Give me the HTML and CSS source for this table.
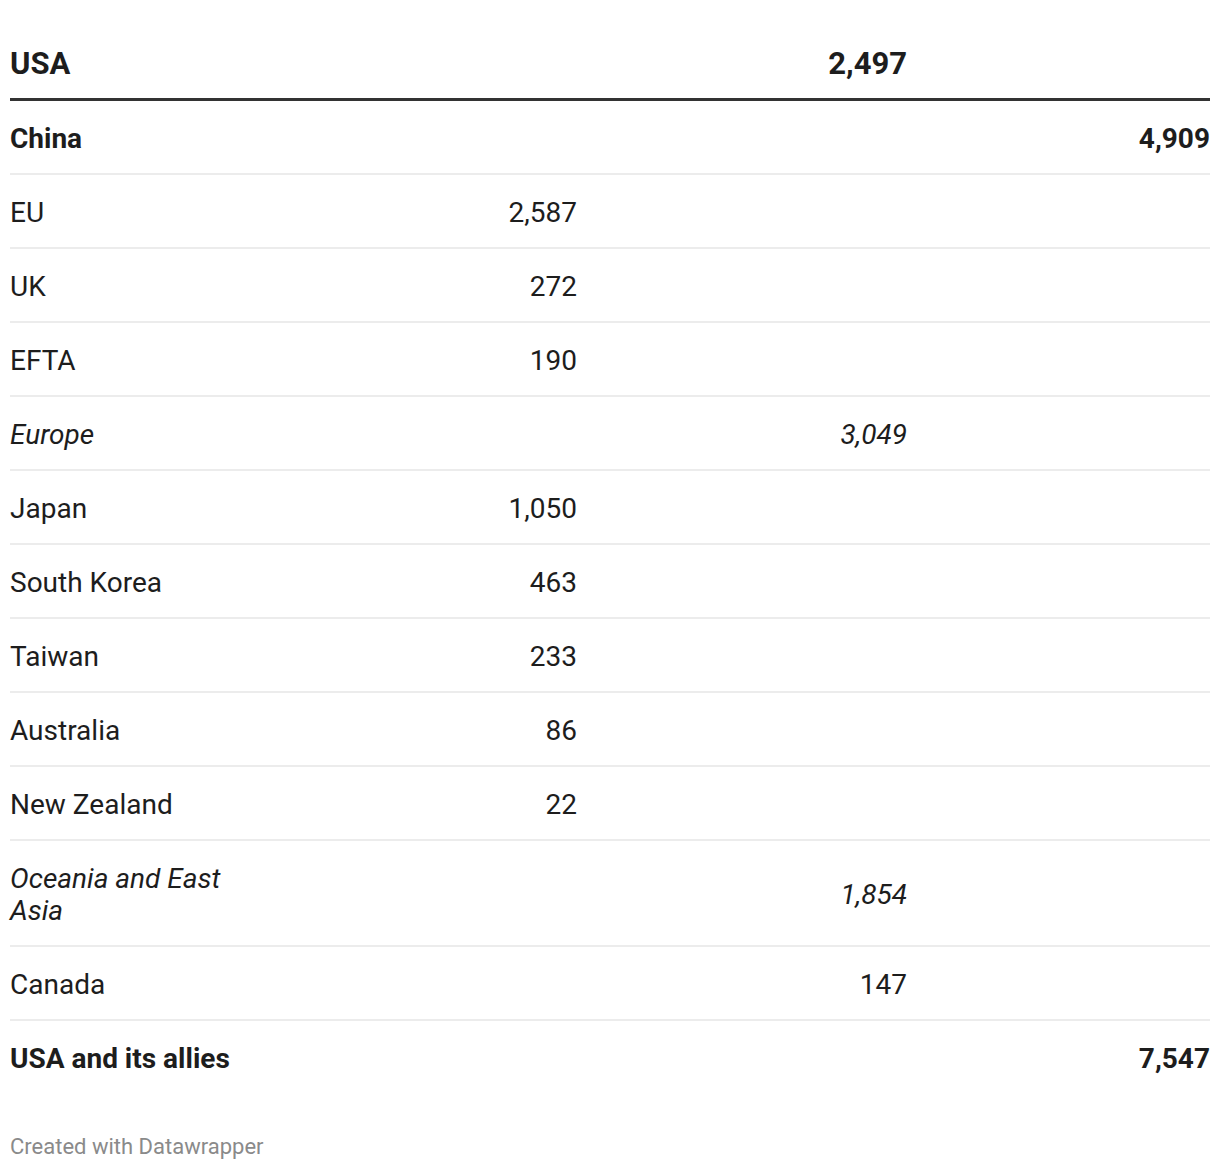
FILE: index.html
```html
<!DOCTYPE html>
<html lang="en">
<head>
<meta charset="utf-8">
<link rel="stylesheet" href="styles.css">
</head>
<body>
<div class="chart">
  <table class="tbl">
    <colgroup>
      <col class="c1"><col class="c2"><col class="c3"><col class="c4">
    </colgroup>
    <thead>
      <tr>
        <th class="lbl">USA</th>
        <th class="num"></th>
        <th class="num">2,497</th>
        <th class="num"></th>
      </tr>
    </thead>
    <tbody>
      <tr class="bold"><td>China</td><td class="num"></td><td class="num"></td><td class="num">4,909</td></tr>
      <tr><td>EU</td><td class="num">2,587</td><td class="num"></td><td class="num"></td></tr>
      <tr><td>UK</td><td class="num">272</td><td class="num"></td><td class="num"></td></tr>
      <tr><td>EFTA</td><td class="num">190</td><td class="num"></td><td class="num"></td></tr>
      <tr class="it"><td>Europe</td><td class="num"></td><td class="num">3,049</td><td class="num"></td></tr>
      <tr><td>Japan</td><td class="num">1,050</td><td class="num"></td><td class="num"></td></tr>
      <tr><td>South Korea</td><td class="num">463</td><td class="num"></td><td class="num"></td></tr>
      <tr><td>Taiwan</td><td class="num">233</td><td class="num"></td><td class="num"></td></tr>
      <tr><td>Australia</td><td class="num">86</td><td class="num"></td><td class="num"></td></tr>
      <tr><td>New Zealand</td><td class="num">22</td><td class="num"></td><td class="num"></td></tr>
      <tr class="it"><td>Oceania and East Asia</td><td class="num"></td><td class="num">1,854</td><td class="num"></td></tr>
      <tr><td>Canada</td><td class="num"></td><td class="num">147</td><td class="num"></td></tr>
      <tr class="bold last"><td>USA and its allies</td><td class="num"></td><td class="num"></td><td class="num">7,547</td></tr>
    </tbody>
  </table>
  <div class="footer">Created with Datawrapper</div>
</div>
</body>
</html>
```

FILE: styles.css
```css
html, body {
  margin: 0;
  padding: 0;
  background: #ffffff;
}
body {
  font-family: Roboto, "Liberation Sans", sans-serif;
  color: #1d1d1d;
}
.chart {
  padding: 11px 10px 0 10px;
}
.tbl {
  width: 1200px;
  border-collapse: collapse;
  table-layout: fixed;
  font-size: 28px;
  line-height: 32px;
}
.c1 { width: 250px; }
.c2 { width: 317px; }
.c3 { width: 330px; }
.c4 { width: 303px; }
.tbl th {
  font-size: 31px;
  font-weight: 700;
  text-align: left;
  padding: 37px 0 18px 0;
  border-bottom: 3px solid #333333;
}
.tbl th.num { text-align: right; }
.tbl td {
  padding: 22px 0 18px 0;
  border-bottom: 2px solid #ececec;
  vertical-align: middle;
}
.tbl td.num { text-align: right; }
.tbl tr.bold td { font-weight: 700; }
.tbl tr.it td { font-style: italic; }
.tbl tr.last td { border-bottom: none; }
.footer {
  margin-top: 41px;
  font-size: 22px;
  line-height: 26px;
  color: #8a8a8a;
}
```
